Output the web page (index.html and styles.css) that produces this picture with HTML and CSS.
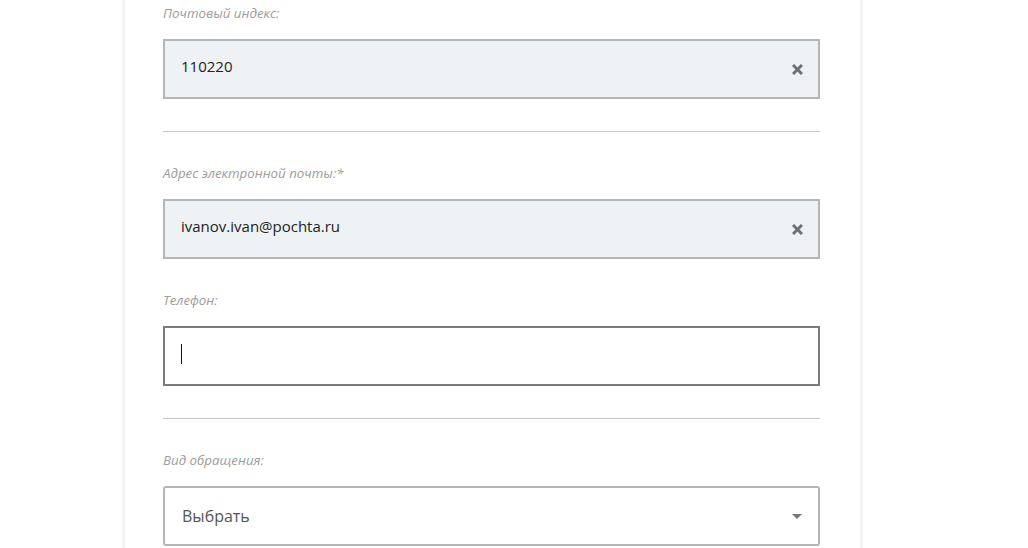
FILE: index.html
```html
<!DOCTYPE html>
<html lang="ru">
<head>
<meta charset="utf-8">
<title>Форма обращения</title>
<link rel="stylesheet" href="styles.css">
</head>
<body>
<div class="page">
  <div class="card">
    <div class="field">
      <div class="label">Почтовый индекс:</div>
      <div class="input filled">
        <span class="value">110220</span>
        <svg class="clear" width="11" height="11" viewBox="0 0 11 11"><path d="M1 1 L10 10 M10 1 L1 10" stroke="#6e7276" stroke-width="3" stroke-linecap="butt"/></svg>
      </div>
    </div>
    <div class="divider"></div>
    <div class="field">
      <div class="label">Адрес электронной почты:*</div>
      <div class="input filled">
        <span class="value">ivanov.ivan@pochta.ru</span>
        <svg class="clear" width="11" height="11" viewBox="0 0 11 11"><path d="M1 1 L10 10 M10 1 L1 10" stroke="#6e7276" stroke-width="3" stroke-linecap="butt"/></svg>
      </div>
    </div>
    <div class="field">
      <div class="label">Телефон:</div>
      <div class="input focused">
        <span class="caret"></span>
      </div>
    </div>
    <div class="divider"></div>
    <div class="field">
      <div class="label">Вид обращения:</div>
      <div class="input select">
        <span class="placeholder">Выбрать</span>
        <svg class="arrow" width="10" height="5" viewBox="0 0 10 5"><path d="M0 0 L10 0 L5 5 Z" fill="#777"/></svg>
      </div>
    </div>
  </div>
</div>
</body>
</html>
```

FILE: styles.css
```css
html, body {
  margin: 0;
  padding: 0;
  background: #ffffff;
  font-family: "Open Sans", "Liberation Sans", sans-serif;
}

.page {
  padding-left: 122px;
  height: 548px;
  overflow: hidden;
}

.card {
  border-left: 3px solid #f4f4f4;
  border-right: 3px solid #f4f4f4;
  background: #fff;
  padding: 4px 40px 40px 38px;
  box-sizing: content-box;
  width: 657px;
  min-height: 600px;
}

.field {
  margin-bottom: 32px;
}

.label {
  font-size: 13.3px;
  line-height: 18px;
  font-style: italic;
  color: #9d9d9d;
  margin-bottom: 17px;
}

.input {
  height: 56px;
  border: 2px solid #b5b5b5;
  display: flex;
  align-items: center;
  padding: 0 15px 0 16px;
  background: #fff;
}

.input.filled {
  background: #eef2f5;
}

.input.focused {
  border-color: #7b7b7b;
}

.input.select {
  border-radius: 3px;
}

.value {
  flex: 1;
  font-size: 15px;
  line-height: 20px;
  color: #222;
  margin-top: -6px;
}

.placeholder {
  flex: 1;
  font-size: 16px;
  color: #555;
  padding-left: 1px;
}

.clear {
  flex: none;
  margin-top: 1px;
}

.arrow {
  flex: none;
  margin-top: 1px;
  margin-right: 1px;
}

.caret {
  display: block;
  width: 1px;
  height: 20px;
  background: #111;
  margin-top: -5px;
}

.divider {
  height: 1px;
  background: #c6c6c6;
  margin-bottom: 32px;
}
```
